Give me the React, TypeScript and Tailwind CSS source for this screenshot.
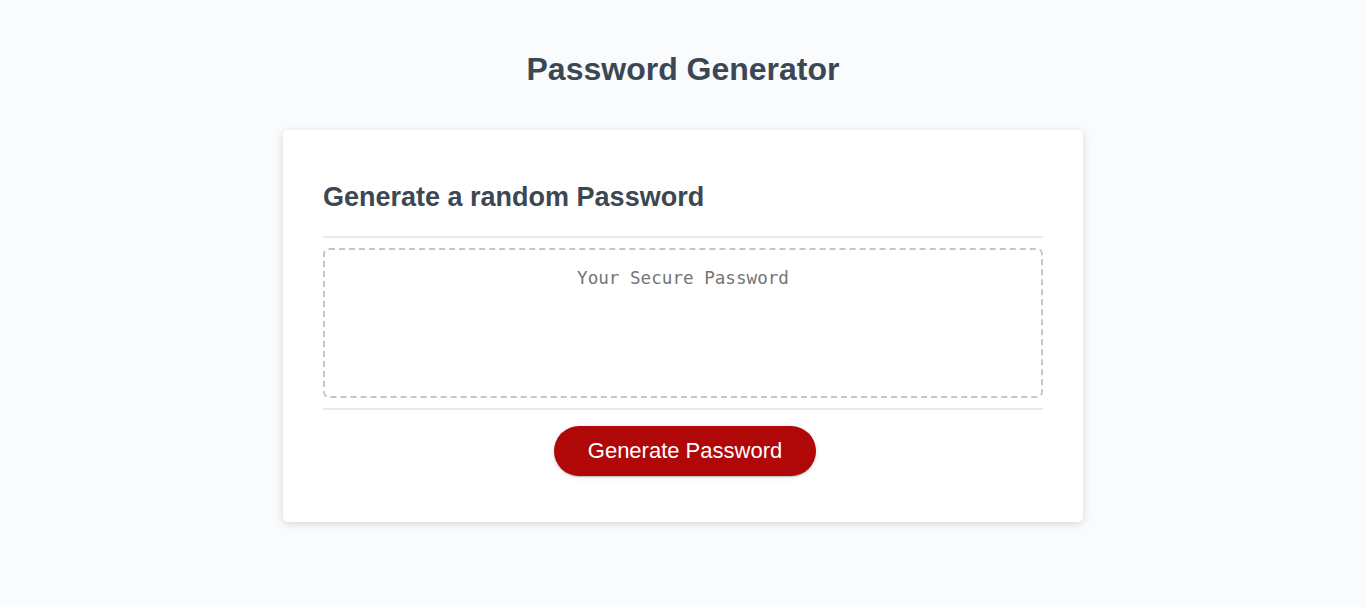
export default function App() {
  return (
    <div className="min-h-screen bg-[#f9fbfd] px-5 pt-[30px] font-['Liberation_Sans',Arial,sans-serif]">
      <header className="pb-5 text-center text-[#3b4854]">
        <h1 className="my-[21.44px] text-[32px] font-bold leading-[37px]">Password Generator</h1>
      </header>

      <div className="mx-auto max-w-[800px] rounded-[5px] bg-white px-10 py-[30px] text-[18px] text-[#3b4854] shadow-[0_2px_8px_0_rgba(0,0,0,0.15)]">
        <div>
          <h2 className="my-[22.4px] text-[27px] font-bold leading-[31px]">Generate a random Password</h2>
          <div className="h-[2px] w-full bg-[#e7e9eb]" />
        </div>

        <div className="min-h-[100px]">
          <textarea
            readOnly
            placeholder="Your Secure Password"
            aria-label="Generated Password"
            className="my-[10px] block h-[150px] w-full resize-none appearance-none overflow-hidden rounded-[6px] border-2 border-dashed border-[#c0c7cf] px-[15px] pt-[17px] text-center font-['DejaVu_Sans_Mono','Liberation_Mono',monospace] text-[17.6px] leading-[22px] text-[#3b4854] outline-none placeholder:text-[#757575]"
          />
        </div>

        <div className="text-center">
          <div className="h-[2px] w-full bg-[#e7e9eb]" />
          <button
            type="button"
            className="mb-4 ml-5 mr-4 mt-4 inline-block cursor-pointer rounded-[25px] bg-[#b00808] px-[34px] py-[14px] text-[22px] leading-[22px] text-white shadow-[0_1px_6px_0_rgba(0,0,0,0.1),0_1px_1px_0_rgba(0,0,0,0.2)]"
          >
            Generate Password
          </button>
        </div>
      </div>
    </div>
  );
}
